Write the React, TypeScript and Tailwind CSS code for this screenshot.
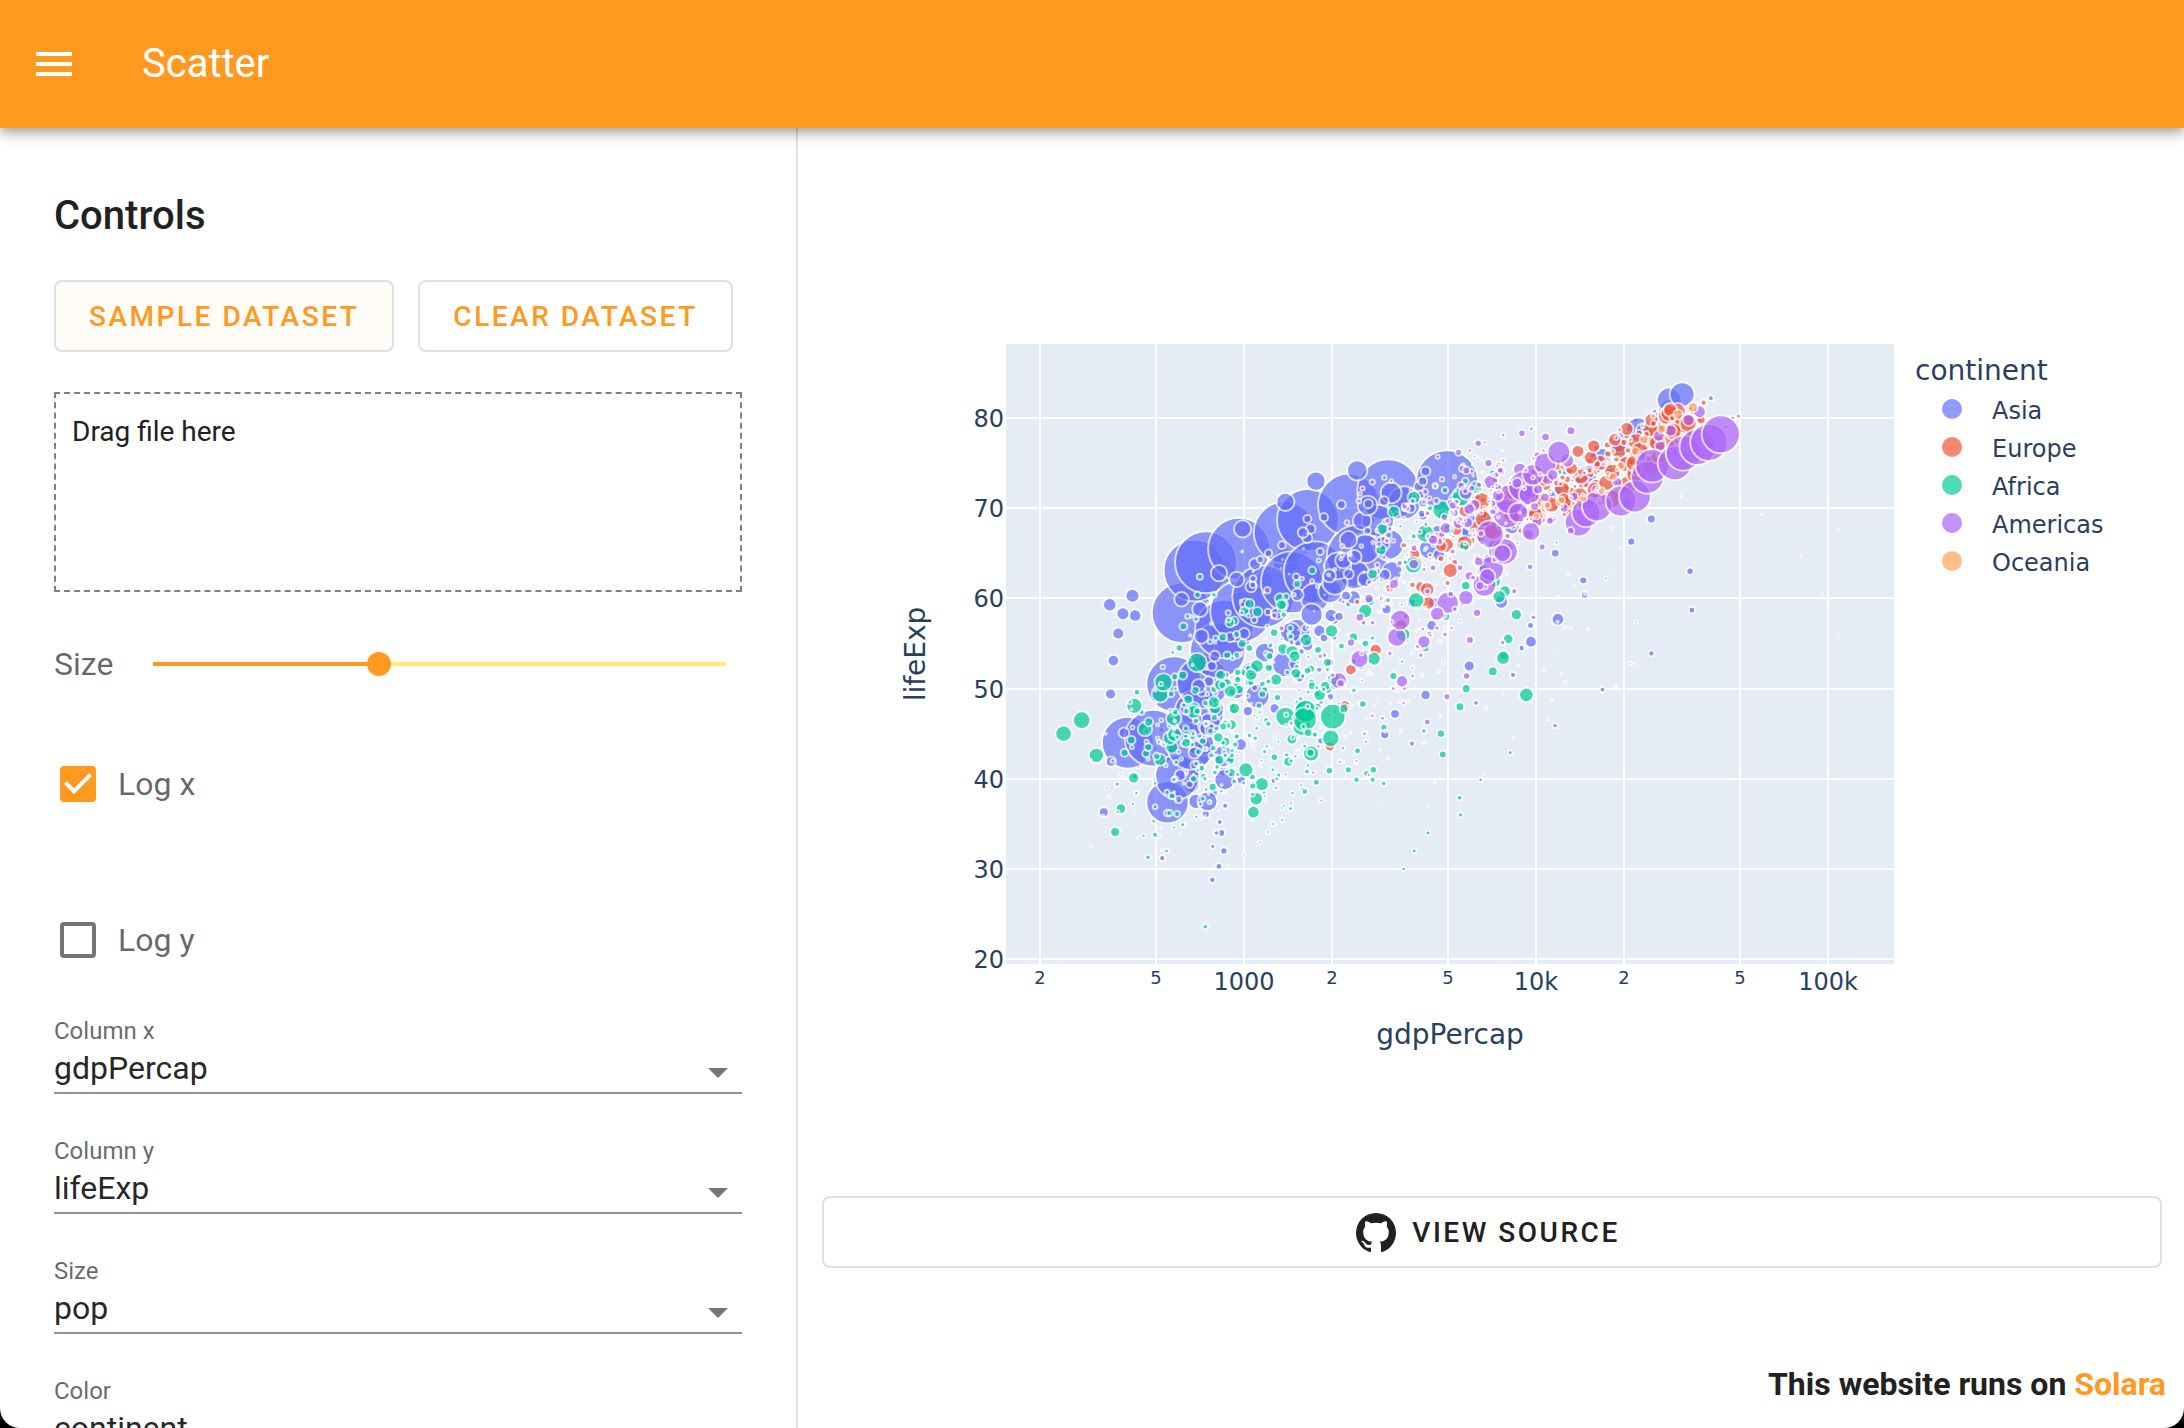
import { useId, useState } from "react";

type Continent = { name: string; color: string; rows: string };

// Each row: population (millions) | GDP per capita | life expectancy, evenly spaced over 1952-2007.
const continents: Continent[] = [
  {
    name: "Asia",
    color: "#636efa",
    rows: `8.4 31.9|779 821 853 836 740 786 978 852 649 635 727 975|28.8 30.3 32 34 36.1 38.4 39.9 40.8 41.7 41.8 42.1 43.8
.12 .71|9867 11636 12753 14805 18269 19340 19211 18524 19036 20292 23404 29796|50.9 53.8 56.9 59.9 63.3 65.6 69.1 70.8 72.6 73.9 74.8 75.6
46.9 51.4 56.8 62.8 70.8 80.4 93 104 113 123 135 150.4|684 662 686 721 630 660 677 752 838 973 1136 1391|37.5 39.3 41.2 43.5 45.3 46.9 50 52.8 56 59.4 62 64.1
4.7 14.1|368 434 497 523 422 525 624 684 682 734 896 1714|39.4 41.4 43.4 45.4 40.3 31.2 51 53.9 55.8 56.5 56.8 59.7
556 637 666 755 862 943 1000 1084 1165 1230 1280 1319|400 576 488 613 677 741 962 1379 1656 2289 3119 4959|44 50.5 44.5 58.4 63.1 64 65.5 67.3 68.7 70.4 72 73
2.1 7|3054 3629 4693 6198 8316 11186 14561 20038 24758 28378 30209 39725|61 64.8 67.7 70 72 73.6 75.5 76.2 77.6 80 81.5 82.2
372 409 454 506 567 634 708 788 872 959 1034 1110|547 590 658 701 724 813 856 977 1164 1459 1747 2452|37.4 40.2 43.6 47.2 50.7 54.2 56.6 58.6 60.2 61.8 62.9 64.7
82 90 99 109 121 137 153 169 185 199 211 223.5|750 859 849 762 1111 1383 1517 1748 2383 3119 2874 3541|37.5 39.9 42.5 46 49.2 52.7 56.2 60.1 62.7 66 68.6 70.6
17.3 69.5|3035 3290 4187 5907 9614 11889 7608 6643 7236 8264 9241 11606|44.9 47.2 49.3 52.5 55.2 57.7 59.6 63 65.7 68 69.5 71
5.4 27.5|4130 6229 8342 8931 9576 14688 14518 11644 3746 3076 4391 4471|45.3 48.4 51.5 54.5 57 60.4 62 65 59.5 58.8 57 59.5
1.6 6.4|4087 5385 7106 8394 12787 13307 15367 17122 18052 20897 21906 25523|65.4 67.8 69.4 70.8 71.6 73.1 74.5 75.6 76.9 78.3 79.7 80.7
86 92 96 101 107 114 118 122 124 126 127 127.5|3217 4318 6577 9848 14779 16610 19384 22376 26825 28817 28605 31656|63 65.5 68.7 71.4 73.4 75.4 77.1 78.7 79.4 80.7 82 82.6
.6 6|1547 1886 2348 2742 2111 2852 4161 4449 3432 3645 3845 4519|43.2 45.7 48.1 51.6 56.5 61.1 63.7 65.9 68 69.8 71.3 72.5
8.9 23.3|1088 1571 1622 2144 3702 4106 4107 4106 3726 1691 1647 1593|50.1 54.1 56.7 59.9 64 67.2 69.1 70.6 70 67.7 66.7 67.3
20.9 49|1031 1488 1536 2029 3031 4657 5623 8533 12104 15994 19234 23348|47.5 52.7 55.3 57.7 62.6 64.8 67.1 69.8 72.2 74.6 77 78.6
.16 2.5|108382 113523 95458 80895 109348 59265 31354 28118 34933 40301 35110 47307|55.6 58 60.5 64.6 67.7 69.3 71.3 74.2 75.2 76.2 76.9 77.6
1.4 3.9|4835 6090 5714 6007 7486 8660 7641 5377 6891 8755 9314 10461|55.9 59.5 62.1 63.9 65.4 66.1 67 67.9 69.3 70.3 71 72
6.7 24.8|1831 1810 2037 2278 2849 3828 4920 5249 7278 10133 10207 12452|48.5 52.1 55.7 59.4 63 65.3 68 69.5 70.7 71.9 73 74.2
.8 2.9|787 913 1056 1226 1421 1648 2001 2339 1785 1902 2141 3096|42.2 45.2 48.3 51.3 53.8 55.5 57.5 60.2 61.3 63.6 65 66.8
20 47.8|331 350 388 349 357 371 424 385 347 415 611 944|36.3 41.9 45.1 49.4 53.1 56.1 58.1 58.3 59.3 60.3 59.9 62.1
9.2 28.9|546 598 652 676 675 694 718 776 898 1011 1057 1091|36.2 37.7 39.4 41.5 44 46.7 49.6 52.5 55.7 59.4 61.3 63.8
.5 3.2|1828 2243 2925 4721 10618 11848 12955 18115 18617 19702 19775 22316|37.6 40.1 43.2 47 52.1 57.4 62.7 67.7 71.2 72.5 74.2 75.6
41 169|685 747 803 942 1050 1176 1443 1705 1972 2049 2093 2606|43.4 45.6 47.7 49.8 51.9 54 56.2 58.2 60.8 61.8 63.6 65.5
22 91|1273 1548 1650 1814 1989 2373 2603 2190 2279 2537 2651 3190|47.8 51.3 54.8 56.4 58.1 60.1 62.1 64.2 66.5 68.6 70.3 71.7
4 27.6|6460 8158 11626 16903 24837 34168 33693 21198 24842 20587 19015 21655|39.9 42.9 45.9 49.9 53.9 58.7 63 66.3 68.8 70.5 71.6 72.8
1.1 4.6|2315 2843 3675 4977 8598 11210 15169 18862 24770 33519 36023 47143|60.4 63.2 65.8 67.9 69.5 70.8 71.8 73.6 75.8 77.2 78.8 80
8 20.4|1084 1073 1074 1136 1213 1349 1648 1877 2154 2664 3015 3970|57.6 61.5 62.2 64.3 65 65.9 68.8 69 70.4 70.5 70.8 72.4
3.7 19.3|1643 2118 2193 1882 2571 3195 3762 3116 3341 4014 4091 4185|45.9 48.3 50.3 53.7 57.3 61.2 64.6 67 69.2 71.5 73 74.1
8.6 23.2|1207 1508 1823 2644 4063 5597 7426 11055 15216 20207 23235 28718|58.5 62.4 65.2 67.5 69.4 70.6 72.2 73.4 74.3 75.3 77 78.4
21 65|758 794 1002 1295 1524 1961 2393 2983 4617 5853 5913 7458|50.8 53.6 56.1 58.3 60.4 62.5 64.6 66.1 67.3 67.5 68.6 70.6
26 85|605 676 772 637 700 714 707 821 989 1386 1764 2442|40.4 42.9 45.4 47.8 50.3 55.8 58.8 62.8 67.7 70.7 73 74.2
1 4|1516 1827 2199 2650 3133 3683 4336 5107 6018 7111 4515 3025|43.2 45.7 48.1 51.6 56.5 60.8 64.4 67 69.7 71.1 72.4 73.4
5 22|782 805 826 862 1265 1830 1978 1971 1879 2117 2235 2281|32.5 34 35.2 37 39.8 44.2 49.1 52.9 55.6 58 60.3 62.7`,
  },
  {
    name: "Europe",
    color: "#EF553B",
    rows: `1.3 3.6|1601 1942 2313 2760 3313 3533 3631 3739 2497 3193 4604 5937|55.2 59.3 64.8 66.2 67.7 68.9 70.4 72 71.6 73 75.7 76.4
6.9 8.2|6137 8843 10751 12835 16662 19749 21597 23688 27042 29096 32418 36126|66.8 67.5 69.5 70.1 70.6 72.2 73.2 74.9 76 77.5 79 79.8
8.7 10.4|8343 9715 10991 13149 16672 19118 20980 22526 25576 27561 30486 33693|68 69.2 70.3 70.9 71.4 72.8 73.9 75.4 76.5 77.5 78.3 79.4
2.8 4.5|974 1354 1710 2172 2860 3528 4127 4314 2547 4766 6019 7446|53.8 58.5 61.9 64.8 67.5 69.9 70.7 71.1 72.2 73.2 74.1 74.9
7.3 7.3|2444 3009 4254 5577 6597 7612 8224 8239 6303 5970 7697 10681|59.6 66.6 69.5 70.4 70.9 70.8 71.1 71.3 71.2 70.3 72.1 73
3.9 4.5|3119 4338 5477 6960 9164 11305 13222 13823 8448 9876 11628 14619|61.2 64.8 67.1 68.5 69.6 70.6 70.5 71.5 72.5 73.7 74.9 75.7
9.1 10.2|6876 8256 10137 11399 13108 14800 15377 16310 14297 16049 17596 22833|66.9 69 69.9 70.4 70.3 70.7 71 71.6 72.4 74 75.5 76.5
4.3 5.5|9692 11100 13583 15937 18866 20423 21688 25116 26407 29804 32167 35278|70.8 71.8 72.4 73 73.5 74.7 74.6 74.8 75.3 76.1 77.2 78.3
4.1 5.2|6425 7545 9372 10922 14359 15605 18533 21141 20647 23724 28205 33207|66.6 67.5 68.8 69.8 70.9 72.5 74.6 74.8 75.7 77.1 78.4 79.3
42.5 61|7030 8663 10560 13000 16107 18293 20294 22066 24704 25890 28926 30470|67.4 68.9 70.5 71.6 72.4 73.8 74.9 76.3 77.5 78.6 79.6 80.7
69.1 71 73.7 76.4 78.7 78.2 78.3 77.7 80.6 82 82.4 82.4|7144 10188 12902 14746 18016 20513 22032 24639 26505 27789 30036 32170|67.5 69.1 70.3 70.8 71 72.5 73.8 74.8 76.1 77.3 78.7 79.4
7.7 10.7|3531 4916 6017 8513 12725 14196 15268 16121 17541 18748 22514 27538|65.9 67.9 69.5 71 72.3 73.7 75.2 76.7 77 77.9 78.3 79.5
9.5 10|5264 6040 7550 9327 10169 11675 12546 12986 10536 11713 14844 18009|64 66.4 68 69.5 69.8 70 69.4 69.6 69.2 71 72.6 73.3
.15 .3|7268 9244 10350 13320 15798 19655 23270 26923 25144 28061 31163 36181|72.5 73.5 73.7 73.7 74.5 76.1 77 77.2 78.8 79 80.5 81.8
3 4.1|5210 5599 6632 7656 9531 11151 12618 13873 17559 24522 34077 40676|66.9 68.9 70.3 71.1 71.3 72 73.1 74.4 75.5 76.1 77.8 78.9
47.7 58.1|4931 6249 8244 10022 12269 14256 16537 19207 22014 24675 27968 28570|65.9 67.8 69.2 71.1 72.2 73.5 75 76.4 77.4 78.8 80.2 80.5
.4 .7|2648 3682 4650 5908 7778 9596 11223 11733 7003 6466 6557 9254|59.2 61.4 63.7 67.2 70.6 73.1 74.1 74.9 75.4 75.4 74 74.5
10.4 16.6|8942 11276 12791 15363 18795 21209 21399 23652 26791 30246 33724 36798|72.1 73 73.2 73.8 73.8 75.2 76.1 76.8 77.4 78 78.5 79.8
3.3 4.6|10095 11654 13450 16362 18965 23311 26299 31541 33966 41283 44684 49357|72.7 73.4 73.5 74.1 74.3 75.4 76 75.9 77.3 78.3 79 80.2
25.7 38.5|4029 4734 5339 6557 8007 9508 8452 9082 7739 10160 12002 15390|61.3 65.8 67.6 69.6 70.9 70.7 71.3 71 71 72.8 74.7 75.6
8.5 10.6|3068 3775 4728 6362 9022 10172 11754 13039 16207 17641 19971 20510|59.8 61.5 64.4 66.6 69.3 70.4 72.8 74.1 74.9 76 77.3 78.1
16.6 22.3|3145 3943 4735 6471 8011 9356 9605 9696 6598 7346 7885 10808|61.1 64.1 66.8 66.8 69.2 69.5 69.7 69.5 69.4 69.7 71.3 72.5
6.9 10.2|3581 4981 6290 7991 10522 12980 15181 15871 9325 7914 7236 9787|58 61.7 64.5 66.9 68.7 70.3 70.2 71.2 71.7 72.2 73.2 74
3.6 5.4|5075 6093 7481 8412 9674 10923 11348 12037 9498 12126 13639 18678|64.4 67.5 70.3 71 70.4 70.5 70.8 71.1 71.4 72.7 73.8 74.7
1.5 2|4215 5862 7402 9405 12384 15277 17867 18679 14215 17161 20660 25768|65.6 67.8 69.2 69.2 69.8 71 71.1 72.3 73.6 75.1 76.7 77.9
28.5 40.4|3834 4565 5694 7994 10639 13237 13926 15765 18603 20445 24835 28821|64.9 66.7 69.7 71.4 73.1 74.4 76.3 76.9 77.6 78.8 79.8 80.9
7.1 9|8528 9912 12329 15258 17832 18856 20667 23587 23880 25267 29342 33860|71.9 72.5 73.4 74.2 74.7 75.4 76.4 77.2 78.2 79.4 80 80.9
4.8 7.6|14734 17909 20431 22966 27195 26982 28398 30282 31872 32135 34481 37506|69.6 70.6 71.3 72.8 73.8 75.4 76.2 77.4 78 79.4 80.6 81.7
22.2 71.2|1969 2219 2323 2826 3451 4269 4241 5089 5678 6601 6508 8458|43.6 48.1 52.1 54.3 57 59.5 61 63.1 66.1 68.8 70.8 71.8
50.4 60.8|9980 11283 12477 14143 15895 17429 18232 21665 22705 26075 29479 33203|69.2 70.4 70.8 71.4 72 72.8 74 75 76.4 77.2 78.5 79.4`,
  },
  {
    name: "Africa",
    color: "#00cc96",
    rows: `9.3 33.3|2449 3014 2551 3247 4183 4910 5745 5681 5023 4797 5288 6223|43.1 45.7 48.3 51.4 54.5 58 61.4 65.8 67.7 69.2 71 72.3
4.2 12.4|3521 3828 4269 5523 5473 3009 2757 2430 2628 2277 2773 4797|30 32 34 36 37.9 39.5 39.9 39.9 40.6 41 41 42.7
1.7 8.1|1063 960 949 1036 1086 1029 1278 1226 1191 1233 1373 1441|38.2 40.4 42.6 44.9 47 49.2 50.9 52.3 53.9 54.8 54.4 56.7
.44 1.6|851 918 984 1215 2264 3215 4551 6206 7954 8647 11004 12570|47.6 49.6 51.5 53.3 56 59.3 61.5 63.6 62.7 52.6 46.6 50.7
4.5 14.3|543 617 723 795 855 743 807 912 932 946 1038 1217|32 34.9 37.8 40.7 43.6 46.1 48.1 49.6 50.3 50.3 50.7 52.3
2.4 8.4|339 380 355 413 464 556 560 622 632 463 446 430|39 40.5 42 43.5 44.1 45.9 47.5 48.2 44.7 45.3 47.4 49.6
5 17.7|1173 1313 1400 1508 1684 1783 2368 2603 1793 1694 1934 2042|38.5 40.4 42.6 44.8 47 49.4 53 55 54.3 52.2 49.9 50.4
1.3 4.4|1071 1191 1193 1136 1070 1109 957 845 748 741 738 706|35.5 37.5 39.5 41.5 43.5 46.8 48.3 50.5 49.4 46.1 43.3 44.7
2.7 10.2|1179 1308 1390 1197 1104 1134 798 952 1058 1005 1156 1704|38.1 39.9 41.7 43.6 45.6 47.4 49.5 51.1 51.7 51.6 50.5 50.7
.15 .71|1103 1211 1407 1876 1938 1173 1267 1316 1247 1174 1076 986|40.7 42.5 44.5 46.5 48.9 50.9 52.9 54.9 57.9 60.7 63 65.2
14.1 64.6|781 906 896 862 905 796 674 673 458 312 241 278|39.1 40.7 42.1 44.1 46 47.8 47.8 47.4 45.5 42.6 45 46.5
.85 3.8|2126 2315 2465 2678 3213 3259 4880 4201 4016 3484 3484 3633|42.1 45.1 48.4 52 54.9 55.6 56.7 57.5 56.4 53 53 55.3
3 18|1389 1501 1729 2052 2378 2518 2603 2157 1648 1786 1649 1545|40.5 42.5 44.9 47.4 49.8 52.4 54 54.7 52 48 46.8 48.3
.06 .5|2670 2865 3021 3020 3694 3082 2879 2880 2377 1895 1908 2082|34.8 37.3 39.7 42.1 44.4 46.5 48.8 50 51.6 53.2 53.4 54.8
22.2 25 28.2 31.7 34.8 38.8 45.7 52.8 59.4 66.1 73.3 80.3|1419 1459 1693 1815 2024 2785 3504 3885 3795 4173 4755 5581|41.9 44.4 47 49.3 51.1 53.3 56 59.8 63.7 67.2 69.8 71.3
.22 .55|376 426 583 916 672 959 928 967 1132 2814 7703 12154|34.5 36 37.5 39 40.5 42 43.7 45.7 47.5 48.2 49.3 51.6
1.4 4.9|329 344 381 469 514 506 525 521 583 913 765 641|35.9 38 40.2 42.2 44.1 44.5 43.9 46.5 50 53.4 55.2 58
20.9 76.5|362 379 419 516 566 557 578 574 421 516 530 691|34.1 36.7 40.1 42.1 43.5 44.5 44.9 46.7 48.1 49.4 50.7 52.9
.42 1.45|4293 4976 6631 8359 11402 21746 15113 11864 13522 14723 12522 13206|37 39 40.5 44.6 48.7 52.8 56.6 60.2 61.4 60.5 56.8 56.7
.28 1.7|485 521 600 735 756 885 836 612 666 654 661 753|30 32.1 33.9 35.9 38.3 41.8 45.6 49.3 52.6 55.9 58 59.4
5.6 22.9|911 1044 1190 1126 1178 993 876 847 925 1005 1112 1328|43.1 44.8 46.5 48.1 49.9 51.8 53.7 55.7 57.5 58.6 58.5 60
2.7 9.9|510 576 687 709 742 875 857 806 794 869 946 943|33.6 34.6 35.8 37.2 38.8 40.8 42.9 45.6 48.6 51.5 53.7 56
.58 1.47|300 432 522 716 820 765 838 736 746 796 576 579|32.5 33.5 34.5 35.5 36.5 37.5 39.3 41.2 43.3 44.9 45.5 46.4
6.5 35.6|854 944 897 1057 1222 1268 1348 1362 1342 1360 1288 1463|42.3 44.7 47.9 50.7 53.6 56.2 58.8 59.3 59.3 54.4 51 54.1
.75 2|299 336 412 499 497 745 797 774 977 1186 1275 1569|42.1 45 47.7 48.5 49.8 52.2 55.1 57.2 59.7 55.6 44.6 42.6
.86 3.2|576 621 634 714 803 640 572 506 636 609 531 415|38.5 39.5 40.5 41.5 42.6 43.8 44.9 46 40.8 42.2 43.8 45.7
1 6|2388 3448 6757 18773 21011 21951 17364 11771 9640 9467 9535 12057|42.7 45.3 47.8 50.2 52.8 57.4 62.2 66.2 68.8 71.6 72.7 74
4.8 19.2|1443 1589 1643 1634 1749 1544 1303 1156 1041 986 895 1045|36.7 38.9 40.8 42.9 44.9 46.9 49 49.4 52.2 55 57.3 59.4
2.9 13.3|369 416 428 496 585 663 632 636 563 692 665 759|36.3 37.2 38.4 39.5 41.8 43.8 45.6 47.5 49.4 47.5 45 48.3
3.8 12|453 490 496 545 581 686 618 684 739 790 952 1043|33.7 35.3 36.9 38.5 40 41.7 43.9 46.4 48.4 49.9 51.8 54.5
1 3.3|743 846 1056 1421 1586 1497 1481 1422 1361 1483 1580 1803|40.5 42.3 44.2 46.3 48.4 50.9 53.6 56.1 58.3 60.4 62.2 64.2
.52 1.25|1968 2034 2529 2475 2575 3711 3688 4783 6058 7426 9022 10957|51 58.1 60.2 61.6 62.9 64.9 66.7 68.7 69.7 70.7 72 72.8
9.9 33.8|1688 1642 1566 1711 1930 2371 2702 2755 2948 2982 3259 3820|42.9 45.4 47.9 50.3 52.9 55.7 59.7 62.7 65.4 67.7 69.6 71.2
6.4 20|469 496 556 567 725 502 462 390 411 472 634 824|31.3 33.8 36.2 38.1 40.3 42.5 42.8 42.9 44.3 46.3 44 42.1
.49 2|2424 2621 3173 3794 3746 3876 4191 3694 3804 3899 4072 4811|41.7 45.2 48.4 51.2 53.9 56.4 59 60.8 62 58.9 51.5 52.9
3.4 12.9|762 836 998 1054 954 809 910 668 582 580 601 620|37.4 38.6 39.5 40.1 40.5 41.3 42.6 44.6 47.4 51.3 54.5 56.9
33.1 37.2 41.9 47.3 53.7 62.2 73 81.6 93.4 106.2 119.9 135|1077 1101 1151 1015 1698 1982 1577 1385 1620 1625 1615 2014|36.3 37.8 39.4 41 42.8 44.5 45.8 46.9 47.5 47.5 46.6 46.9
.26 .8|2719 2769 3173 4021 5048 4320 5267 5303 6101 6072 6316 7670|52.7 55.1 57.7 60.5 64.3 67.1 69.9 71.9 73.6 74.8 75.7 76.4
2.5 8.9|493 540 597 511 591 670 882 848 737 590 786 863|40 41.5 43 44.1 44.6 45 46.2 44 23.6 36.1 43.4 46.2
.06 .2|880 861 1072 1385 1533 1738 1890 1517 1429 1339 1353 1598|46.5 48.9 51.9 54.4 56.5 58.6 60.4 61.7 62.7 63.3 64.3 65.5
2.8 12.3|1450 1568 1655 1612 1598 1562 1518 1442 1368 1392 1520 1712|37.3 39.3 41.5 43.6 45.8 48.9 52.4 55.8 58.2 60.2 61.6 63.1
2.1 6.1|880 1004 1117 1206 1354 1348 1465 1294 1069 575 699 863|30.3 31.6 32.8 34.1 35.4 36.8 38.4 40 38.3 39.9 41 42.6
2.5 9.1|1136 1258 1369 1285 1254 1451 1176 1093 927 931 882 926|33 35 37 39 41 42 43 44.5 39.7 43.8 45.9 48.2
14.3 44|4725 5487 5769 7114 7766 8029 8568 7826 7225 7479 7711 9270|45 48 50 51.9 53.7 55.5 58.2 60.8 61.9 60.2 53.4 49.3
8.5 42.3|1616 1770 1960 1688 1660 2203 1896 1508 1492 1632 1994 2602|38.6 39.6 40.9 42.9 45.1 47.8 50.3 51.7 53.6 55.4 56.4 58.6
.29 1.13|1148 1245 1857 2614 3365 3781 3895 3985 3553 3877 4128 4513|41.4 43.4 45 46.6 49.6 52.5 55.6 57.7 58.5 54.3 43.9 39.6
8.3 38.1|717 699 722 848 916 962 874 832 826 789 899 1107|41.2 43 44.2 45.8 47.6 49.9 50.6 51.5 50.4 48.5 49.7 52.5
1.2 5.7|860 926 1068 1478 1650 1533 1345 1202 1034 982 886 883|38.6 41.2 43.9 46.8 49.8 52.9 55.5 56.9 58.1 58.4 57.6 58.4
3.6 10.3|1468 1395 1660 1932 2753 3120 3560 3810 4333 4877 5723 7093|44.6 47.1 49.6 52.1 55.6 59.8 64 66.9 70 72 73 73.9
5.8 29.2|735 774 767 909 951 844 682 617 644 816 928 1056|40 42.6 45.3 48.1 51 50.4 49.8 51.5 48.8 44.6 47.8 51.5
2.7 11.7|1147 1312 1453 1777 1773 1589 1408 1213 1211 1071 1072 1271|42 44.1 46 47.8 50.1 51.4 51.8 50.8 46.1 40.2 39.2 42.4
3.1 12.3|407 519 527 570 799 686 789 706 693 792 672 470|48.5 50.5 52.4 54 55.6 57.7 60.4 62.4 60.4 46.8 40 43.5`,
  },
  {
    name: "Americas",
    color: "#ab63fa",
    rows: `17.9 40.3|5911 6857 7133 8053 9443 10079 8998 9140 9308 10967 8798 12779|62.5 64.4 65.1 65.6 67.1 68.5 69.9 70.8 71.9 73.3 74.3 75.3
2.9 9.1|2677 2128 2181 2587 2980 3548 3157 2754 2962 3326 3413 3822|40.4 41.9 43.4 45 46.7 50 53.9 57.3 60 62 63.9 65.6
56.6 65.6 76 88 101 114 129 143 156 169 180 190|2109 2487 3337 3430 4986 6660 7031 7807 6950 7958 8131 9066|50.9 53.3 55.7 57.6 59.5 61.5 63.3 65.2 67.1 69.4 71 72.4
14.8 33.4|11367 12490 13462 16077 18971 22091 22899 26627 26343 28955 33329 36319|68.8 70 71.3 72.1 72.9 74.2 75.8 76.9 78 78.6 79.8 80.7
6.4 16.3|3940 4316 4519 5107 5494 4757 5096 5547 7596 10118 10779 13172|54.7 56.1 57.9 60.5 63.4 67.1 70.6 72.5 74.1 75.8 77.9 78.6
12.4 44.2|2144 2324 2492 2679 3265 3816 4398 4903 5445 6117 5755 7007|50.6 55.1 57.9 60 61.6 63.8 66.7 67.8 68.4 70.3 71.7 72.9
.93 4.1|2627 2990 3461 4162 5118 5927 5263 5630 6160 6677 7723 9645|57.2 60 62.8 65.4 67.8 70.8 73.5 74.8 75.7 77.3 78.1 78.8
6 11.4|5587 6092 5181 5690 5305 6380 7317 7533 5593 5432 6341 8948|59.4 62.3 65.2 68.3 70.7 72.6 73.7 74.2 74.4 76.2 77.2 78.3
2.5 9.3|1398 1544 1662 1654 2190 2682 2861 2899 3044 3614 4564 6025|45.9 49.8 53.5 56.8 59.6 61.8 63.7 66 68.5 70 70.8 72.2
3.5 13.8|3522 3780 4086 4579 5281 6680 7214 6482 7104 7429 5773 6873|48.4 51.4 54.6 56.7 58.8 61.3 64.3 67.2 69.6 72.3 74.2 75
2 6.9|3048 3422 3777 4359 4520 5139 4098 4140 4444 5155 5352 5728|45.3 48.6 52.3 55.9 58.2 56.7 56.6 63.2 66.8 69.5 70.7 71.9
3.1 12.6|2428 2617 2750 3243 4031 4880 4820 4246 4439 4684 4858 5186|42 44.1 47 50 53.7 56 58.1 60.8 63.4 66.3 69 70.3
3.2 8.5|1840 1727 1797 1452 1654 1874 2011 1823 1456 1342 1270 1202|37.6 40.7 43.6 46.2 48 49.9 51.5 53.6 55.1 56.7 58.1 60.9
1.5 7.5|2195 2220 2291 2538 2530 3203 3122 3023 3082 3160 3100 3548|41.9 44.7 48 50.9 53.9 57.4 60.9 64.5 66.4 67.7 68.6 70.2
1.4 2.8|2899 4757 5246 6125 7434 6650 6068 6351 7405 7122 6995 7321|58.5 62.6 65.6 67.5 69 70.1 71.2 71.8 71.8 72.3 72 72.6
30.1 35 41.1 48 56 63.8 71.6 80.1 88.1 95.9 102.5 108.7|3478 4132 4582 5755 6809 7675 9611 8688 9472 9767 10742 11978|50.8 55.2 58.3 60.1 62.4 65 67.4 69.5 71.5 73.7 74.9 76.2
1.2 5.7|3112 3457 3634 4643 4689 5486 3471 2956 2170 2253 2475 2749|42.3 45.4 48.6 51.9 55.2 57.5 59.3 62 65.8 68.4 70.8 72.9
.94 3.2|2480 2962 3537 4421 5364 5352 7010 7035 6619 7114 7356 9809|55.2 59.2 61.8 64.1 66.2 68.7 70.5 71.5 72.5 73.7 74.7 75.5
1.6 6.7|1952 2047 2148 2299 2523 3248 4259 3999 4196 4247 3784 4173|62.6 63.2 64.4 65 65.8 66.4 66.9 67.4 68.2 69.4 70.8 71.8
8 28.7|3759 4245 4957 5788 5938 6281 6435 6361 4446 5838 5909 7409|43.9 46.3 49.1 51.4 55.4 58.4 61.4 64.1 66.5 68.4 69.9 71.4
2.2 3.9|3082 3907 5108 6929 9123 9770 10331 12281 14642 16999 18856 19329|64.3 68.5 69.6 71.1 72.2 73.4 73.8 74.6 73.9 74.9 77.8 78.7
.66 1.06|3023 4100 4998 5621 6619 7900 9119 7389 7371 8793 11461 18009|59.1 61.8 64.9 65.4 65.9 68.3 68.8 69.6 69.9 69.5 69 69.8
157.6 172 186.5 198.7 209.9 220.2 232.2 242.8 256.9 272.9 287.7 301.1|13990 14847 16173 19530 21806 24073 25010 29884 32004 35767 39097 42952|68.4 69.5 70.2 70.8 71.3 73.4 74.7 75 76.1 76.8 77.3 78.2
2.3 3.4|5717 6151 5603 5445 5703 6504 6920 7452 8137 9230 7727 10611|66.1 67 68.3 68.5 68.7 69.5 70.8 71.9 72.8 74.2 75.3 76.4
5.4 26.1|7690 9803 8423 9541 10505 13144 11153 9884 10734 10165 8606 11416|55.1 57.9 60.8 63.5 65.7 67.5 68.6 70.2 71.2 72.1 72.8 73.7`,
  },
  {
    name: "Oceania",
    color: "#FFA15A",
    rows: `8.7 20.4|10040 10950 12217 14526 16789 18334 19477 21889 23425 26998 30688 34435|69.1 70.3 70.9 71.1 71.9 73.5 74.7 76.3 77.6 78.8 80.4 81.2
2 4.1|10557 12247 13176 14464 16046 16234 17632 19007 18363 21050 23190 25185|69.4 70.3 71.2 71.5 71.9 72.2 73.8 74.3 76.3 77.6 79.1 80.2`,
  },
];

const YEARS = 12;
const RADIUS_SCALE = 1.1;
const MAX_RADIUS = 31;

const xAt = (gdp: number) => 446 + 292 * (Math.log10(gdp) - 3);
const yAt = (life: number) => 98 + (80 - life) * 9.02;

function sample(values: number[], year: number) {
  if (values.length === YEARS) return values[year];
  const t = year / (YEARS - 1);
  return values[0] * Math.pow(values[values.length - 1] / values[0], t);
}

const traces = continents.map(({ name, color, rows }) => ({
  name,
  color,
  points: rows.split("\n").flatMap((row) => {
    const [pop, gdp, life] = row.split("|").map((part) => part.trim().split(" ").map(Number));
    return Array.from({ length: YEARS }, (_, year) => ({
      x: xAt(gdp[year]),
      y: yAt(life[year]),
      r: Math.min(MAX_RADIUS, RADIUS_SCALE * Math.sqrt(sample(pop, year))),
    }));
  }),
}));

const xTicks = [
  { value: 200, label: "2", minor: true },
  { value: 500, label: "5", minor: true },
  { value: 1000, label: "1000", minor: false },
  { value: 2000, label: "2", minor: true },
  { value: 5000, label: "5", minor: true },
  { value: 10000, label: "10k", minor: false },
  { value: 20000, label: "2", minor: true },
  { value: 50000, label: "5", minor: true },
  { value: 100000, label: "100k", minor: false },
];
const yTicks = [20, 30, 40, 50, 60, 70, 80];

function ScatterChart() {
  return (
    <svg
      viewBox="0 0 1386 760"
      role="img"
      aria-label="Scatter plot of lifeExp against gdpPercap"
      className="block w-full fill-[#2a3f5f] font-['DejaVu_Sans',sans-serif]"
    >
      <rect x="208" y="24" width="888" height="620" fill="#E5ECF6" />
      <g stroke="#fff" strokeWidth="2">
        {xTicks.map(({ value }) => (
          <line key={value} x1={Math.round(xAt(value))} x2={Math.round(xAt(value))} y1="24" y2="644" />
        ))}
        {yTicks.map((value) => (
          <line key={value} x1="208" x2="1096" y1={Math.round(yAt(value))} y2={Math.round(yAt(value))} />
        ))}
      </g>
      {traces.map(({ name, color, points }) => (
        <g key={name} fill={color} stroke="#fff" strokeWidth="2">
          {points.map(({ x, y, r }, i) => (
            <circle key={i} cx={x} cy={y} r={r} opacity="0.7" />
          ))}
        </g>
      ))}
      <g textAnchor="middle">
        {xTicks.map(({ value, label, minor }) => (
          <text key={value} x={xAt(value)} y={minor ? 664 : 670} fontSize={minor ? 18 : 24}>
            {label}
          </text>
        ))}
        <text x="652" y="724" fontSize="28">gdpPercap</text>
        <text x="0" y="0" fontSize="28" transform="translate(127 334) rotate(-90)">lifeExp</text>
      </g>
      <g textAnchor="end" fontSize="24">
        {yTicks.map((value) => (
          <text key={value} x="206" y={yAt(value) + 9}>{value}</text>
        ))}
      </g>
      <text x="1117" y="60" fontSize="28">continent</text>
      {continents.map(({ name, color }, i) => (
        <g key={name}>
          <circle cx="1154" cy={89 + i * 38} r="10" fill={color} opacity="0.7" />
          <text x="1194" y={99 + i * 38} fontSize="24">{name}</text>
        </g>
      ))}
    </svg>
  );
}

function CheckRow({ label, initial }: { label: string; initial: boolean }) {
  const [checked, setChecked] = useState(initial);
  return (
    <label className="ml-1.5 flex w-fit items-center gap-[22px] text-[32px] leading-12 text-black/60">
      <span className="grid size-9 [&>*]:col-start-1 [&>*]:row-start-1">
        <input
          type="checkbox"
          checked={checked}
          onChange={(e) => setChecked(e.target.checked)}
          className="size-9 appearance-none rounded-[4px] border-4 border-[#757575] checked:border-[#ff991f] checked:bg-[#ff991f]"
        />
        {checked && (
          <svg viewBox="3 3 18 18" className="pointer-events-none size-9 fill-white" aria-hidden="true">
            <path d="M10,17L5,12L6.41,10.58L10,14.17L17.59,6.58L19,8M10,17" />
          </svg>
        )}
      </span>
      {label}
    </label>
  );
}

const columns = ["gdpPercap", "lifeExp", "pop", "continent", "country", "year"];

function SelectField({ label, initial }: { label: string; initial: string }) {
  const id = useId();
  return (
    <div className="flex h-20 shrink-0 flex-col">
      <label htmlFor={id} className="text-2xl leading-[34px] text-black/60">{label}</label>
      <div className="grid items-center border-b-2 border-[#949494] [&>*]:col-start-1 [&>*]:row-start-1">
        <select
          id={id}
          defaultValue={initial}
          className="h-11 w-full appearance-none bg-transparent pb-1 text-[32px] leading-10 text-black/87 outline-none"
        >
          {columns.map((column) => (
            <option key={column}>{column}</option>
          ))}
        </select>
        <svg viewBox="0 0 20 10" className="pointer-events-none mt-1.5 mr-3.5 h-2.5 w-5 justify-self-end fill-[#757575]" aria-hidden="true">
          <path d="M0 0h20L10 10z" />
        </svg>
      </div>
    </div>
  );
}

function SizeSlider() {
  const [value, setValue] = useState(39.5);
  return (
    <div className="flex items-center pr-4 text-[32px] leading-12 text-black/60">
      <label htmlFor="marker-size" className="w-[99px]">Size</label>
      <div className="relative h-6 flex-1">
        <div className="mt-2.5 h-1 bg-[#ffec70]">
          <div className="h-full bg-[#ff991f]" style={{ width: `${value}%` }} />
        </div>
        <input
          id="marker-size"
          type="range"
          min="0"
          max="100"
          step="0.5"
          value={value}
          onChange={(e) => setValue(Number(e.target.value))}
          className="absolute -inset-x-3 top-0 h-6 w-[calc(100%+24px)] appearance-none bg-transparent [&::-webkit-slider-thumb]:size-6 [&::-webkit-slider-thumb]:appearance-none [&::-webkit-slider-thumb]:rounded-full [&::-webkit-slider-thumb]:bg-[#ff991f]"
        />
      </div>
    </div>
  );
}

const buttonClass =
  "flex h-18 items-center justify-center rounded-lg border-2 border-[#e0e0e0] pt-0.5 text-[28px] font-medium tracking-[0.09em] uppercase";

export default function App() {
  return (
    <div className="h-screen bg-black font-[Roboto,sans-serif] text-[#212121]">
      <div className="flex h-full flex-col overflow-hidden rounded-b-[20px] bg-white">
        <header className="z-10 flex h-32 shrink-0 items-center gap-[70px] bg-[#ff991f] pl-9 text-white shadow-[0_4px_8px_-2px_rgba(0,0,0,0.2),0_8px_10px_rgba(0,0,0,0.14),0_2px_20px_rgba(0,0,0,0.12)]">
          <button type="button" aria-label="Menu" className="flex w-9 flex-col gap-1.5">
            <span className="h-1 bg-white" />
            <span className="h-1 bg-white" />
            <span className="h-1 bg-white" />
          </button>
          <h1 className="text-[40px] leading-[60px]">Scatter</h1>
        </header>

        <div className="flex min-h-0 flex-1">
          <aside className="flex w-[798px] shrink-0 flex-col overflow-hidden border-r-2 border-[#e0e0e0] pr-[54px] pl-[54px]">
            <h2 className="mt-14 text-[40px] leading-16 font-medium">Controls</h2>
            <div className="mt-8 flex gap-6">
              <button type="button" className={`${buttonClass} bg-[#fffbf6] px-[33px] text-[#ff991f]`}>
                Sample dataset
              </button>
              <button type="button" className={`${buttonClass} px-[33px] text-[#ff991f]`}>
                Clear dataset
              </button>
            </div>
            <div className="mt-10 h-50 shrink-0 border-2 border-dashed border-[#808080] px-4 py-[18px] text-[28px] leading-10">
              Drag file here
            </div>
            <div className="mt-12">
              <SizeSlider />
            </div>
            <div className="mt-18 flex flex-col gap-27">
              <CheckRow label="Log x" initial />
              <CheckRow label="Log y" initial={false} />
            </div>
            <div className="mt-[50px] flex flex-col gap-10">
              <SelectField label="Column x" initial="gdpPercap" />
              <SelectField label="Column y" initial="lifeExp" />
              <SelectField label="Size" initial="pop" />
              <SelectField label="Color" initial="continent" />
            </div>
          </aside>

          <main className="flex min-w-0 flex-1 flex-col pt-48">
            <ScatterChart />
            <a href="#source" className={`${buttonClass} mt-[116px] mr-[22px] ml-6 gap-4`}>
              <svg viewBox="2 2 20 20" className="-ml-2 size-10 fill-current" aria-hidden="true">
                <path d="M12,2A10,10 0 0,0 2,12C2,16.42 4.87,20.17 8.84,21.5C9.34,21.58 9.5,21.27 9.5,21C9.5,20.77 9.5,20.14 9.5,19.31C6.73,19.91 6.14,17.97 6.14,17.97C5.68,16.81 5.03,16.5 5.03,16.5C4.12,15.88 5.1,15.9 5.1,15.9C6.1,15.97 6.63,16.93 6.63,16.93C7.5,18.45 8.97,18 9.54,17.76C9.63,17.11 9.89,16.67 10.17,16.42C7.95,16.17 5.62,15.31 5.62,11.5C5.62,10.39 6,9.5 6.65,8.79C6.55,8.54 6.2,7.5 6.75,6.15C6.75,6.15 7.59,5.88 9.5,7.17C10.29,6.95 11.15,6.84 12,6.84C12.85,6.84 13.71,6.95 14.5,7.17C16.41,5.88 17.25,6.15 17.25,6.15C17.8,7.5 17.45,8.54 17.35,8.79C18,9.5 18.38,10.39 18.38,11.5C18.38,15.32 16.04,16.16 13.81,16.41C14.17,16.72 14.5,17.33 14.5,18.26C14.5,19.6 14.5,20.68 14.5,21C14.5,21.27 14.66,21.59 15.17,21.5C19.14,20.16 22,16.42 22,12A10,10 0 0,0 12,2Z" />
              </svg>
              View source
            </a>
            <p className="mt-auto mr-[18px] mb-5 text-right text-[32px] leading-12 font-bold">
              This website runs on <a href="#solara" className="text-[#ff991f]">Solara</a>
            </p>
          </main>
        </div>
      </div>
    </div>
  );
}
